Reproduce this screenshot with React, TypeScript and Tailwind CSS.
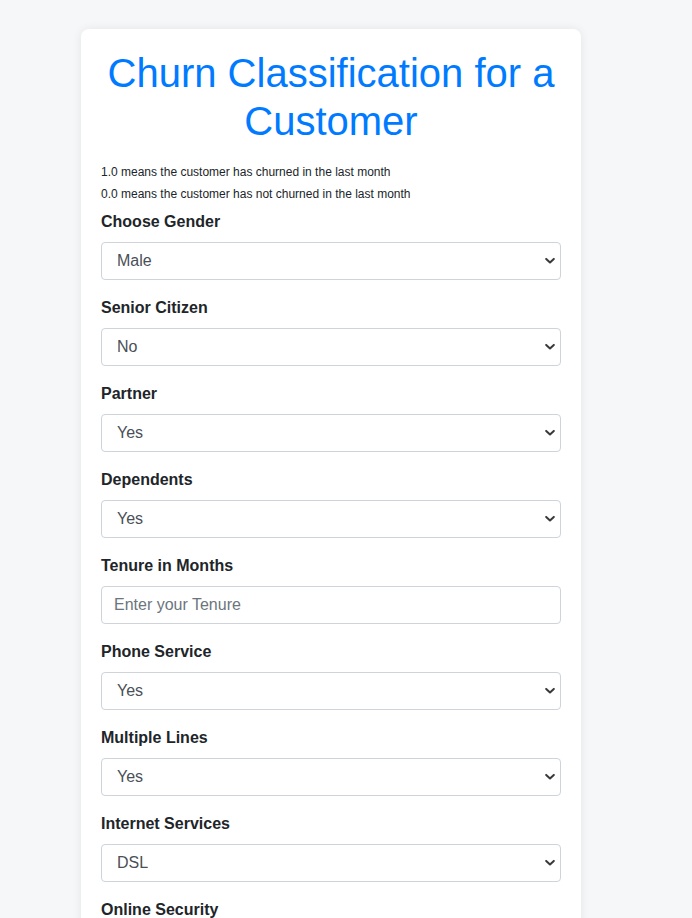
import React from "react";

const Chevron = () => (
  <svg
    className="pointer-events-none absolute right-[6px] top-1/2 -translate-y-1/2"
    width="10"
    height="7"
    viewBox="0 0 10 7"
    fill="none"
  >
    <path d="M1.2 1.4 L5 5 L8.8 1.4" stroke="#3a3a3a" strokeWidth="2" strokeLinecap="round" strokeLinejoin="round" />
  </svg>
);

const SelectField = ({ label, value, options }: { label: string; value: string; options: string[] }) => (
  <div className="mb-4">
    <label className="block text-[16px] leading-[24px] font-bold text-[#212529] mb-2">{label}</label>
    <div className="relative">
      <select
        defaultValue={value}
        className="block w-full h-[38px] appearance-none rounded-[4px] border border-[#ced4da] bg-white pl-[15px] pr-8 text-[16px] text-[#495057] outline-none"
        style={{ fontFamily: '"Liberation Sans", Arial, sans-serif' }}
      >
        {options.map((o) => (
          <option key={o}>{o}</option>
        ))}
      </select>
      <Chevron />
    </div>
  </div>
);

export default function App() {
  return (
    <div
      className="min-h-screen bg-[#f6f7f9] pt-[29px] pb-10"
      style={{ fontFamily: '"Liberation Sans", Arial, sans-serif' }}
    >
      <div className="ml-[81px] w-[500px] rounded-[8px] bg-white px-5 pt-5 pb-6 shadow-[0_0_10px_rgba(0,0,0,0.08)]">
        <h1 className="text-center text-[40px] leading-[48px] font-normal text-[#007bff] mb-[17px]">
          Churn Classification for a Customer
        </h1>
        <div className="text-[12px] leading-[21px] text-[#212529]">
          <p>1.0 means the customer has churned in the last month</p>
          <p className="mt-[1px]">0.0 means the customer has not churned in the last month</p>
        </div>
        <div className="mt-[5px]">
          <SelectField label="Choose Gender" value="Male" options={["Male", "Female"]} />
          <SelectField label="Senior Citizen" value="No" options={["No", "Yes"]} />
          <SelectField label="Partner" value="Yes" options={["Yes", "No"]} />
          <SelectField label="Dependents" value="Yes" options={["Yes", "No"]} />
          <div className="mb-4">
            <label className="block text-[16px] leading-[24px] font-bold text-[#212529] mb-2">Tenure in Months</label>
            <input
              type="text"
              placeholder="Enter your Tenure"
              className="block w-full h-[38px] rounded-[4px] border border-[#ced4da] bg-white px-3 text-[16px] text-[#495057] placeholder:text-[#6c757d] outline-none"
            />
          </div>
          <SelectField label="Phone Service" value="Yes" options={["Yes", "No"]} />
          <SelectField label="Multiple Lines" value="Yes" options={["Yes", "No", "No phone service"]} />
          <SelectField label="Internet Services" value="DSL" options={["DSL", "Fiber optic", "No"]} />
          <SelectField label="Online Security" value="Yes" options={["Yes", "No", "No internet service"]} />
          <SelectField label="Online Backup" value="Yes" options={["Yes", "No", "No internet service"]} />
        </div>
      </div>
    </div>
  );
}
